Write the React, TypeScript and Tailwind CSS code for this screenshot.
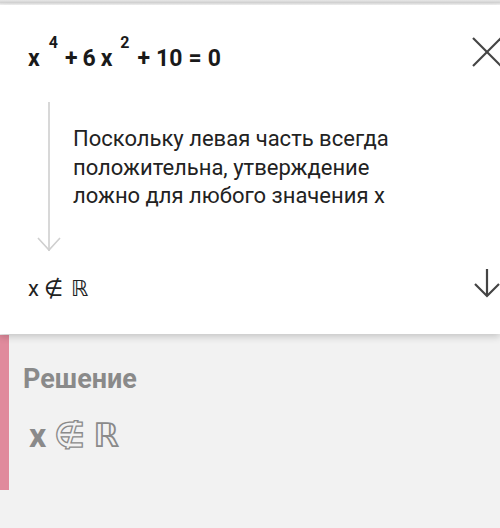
import React from "react";

export default function App() {
  return (
    <div className="w-[500px] h-[528px] bg-[#f2f2f2] overflow-hidden font-['Roboto','DejaVu_Sans',sans-serif] text-[#1a1a1a]">
      <div className="h-[5px] bg-gradient-to-b from-[#e6e6e6] via-[#d4d4d4] to-[#f6f6f6]" />
      <div className="relative z-10 h-[329px] bg-white shadow-[0_3px_7px_rgba(0,0,0,0.18)]">
        {/* formula row */}
        <div className="flex justify-between pt-[32px] pl-[28px]">
          <div className="mt-[9px] h-[26px] leading-[26px] text-[23px] font-bold whitespace-nowrap">
            <span>x</span>
            <span className="relative -top-[18px] ml-[9px] text-[16px]">4</span>
            <span className="ml-[7px]">+</span>
            <span className="ml-[5px]">6</span>
            <span className="ml-[5px]">x</span>
            <span className="relative -top-[18px] ml-[8px] text-[16px]">2</span>
            <span className="ml-[8px]">+</span>
            <span className="ml-[6px]">10</span>
            <span className="ml-[6px]">=</span>
            <span className="ml-[6px]">0</span>
          </div>
          <svg width="28" height="30" viewBox="0 0 28 30" className="shrink-0" fill="none" stroke="#444" strokeWidth="2.2">
            <line x1="1" y1="1" x2="29" y2="29" />
            <line x1="29" y1="1" x2="1" y2="29" />
          </svg>
        </div>

        {/* explanation row */}
        <div className="flex mt-[30px]">
          <svg width="25" height="152" viewBox="0 0 25 152" className="ml-[37px] shrink-0" fill="none" stroke="#cfcfcf" strokeWidth="1.6">
            <line x1="12" y1="0" x2="12" y2="149" />
            <polyline points="1,136 12,148 23,136" />
          </svg>
          <p className="ml-[11px] mt-[23px] text-[22px] leading-[28.5px] text-[#222] whitespace-nowrap">
            Поскольку левая часть всегда
            <br />
            положительна, утверждение
            <br />
            ложно для любого значения x
          </p>
        </div>

        {/* result row */}
        <div className="flex justify-between mt-[14px] pl-[28px]">
          <div className="mt-[8px] h-[26px] leading-[26px] text-[22px] text-[#222] whitespace-nowrap">
            <span>x</span>
            <span className="ml-[5px]">∉</span>
            <span className="ml-[8px]">ℝ</span>
          </div>
          <svg width="28" height="30" viewBox="0 0 28 30" className="shrink-0" fill="none" stroke="#444" strokeWidth="2.2">
            <line x1="15" y1="1" x2="15" y2="28" />
            <polyline points="3,16 15,28 27,16" />
          </svg>
        </div>
      </div>

      {/* solution section */}
      <div className="flex mt-[1px]">
        <div className="w-[9px] h-[155px] bg-[#e08a9c] shrink-0" />
        <div className="pl-[14px]">
          <div className="mt-[29px] h-[30px] leading-[30px] text-[27px] font-bold text-[#8a8a8a]">
            Решение
          </div>
          <div className="mt-[21px] h-[40px] leading-[40px] text-[34px] font-bold text-[#8a8a8a] whitespace-nowrap">
            <span className="ml-[6px]">x</span>
            <span className="ml-[8px] text-transparent [-webkit-text-stroke:1.3px_#8a8a8a]">∉</span>
            <span className="ml-[8px] font-normal">ℝ</span>
          </div>
        </div>
      </div>
    </div>
  );
}
